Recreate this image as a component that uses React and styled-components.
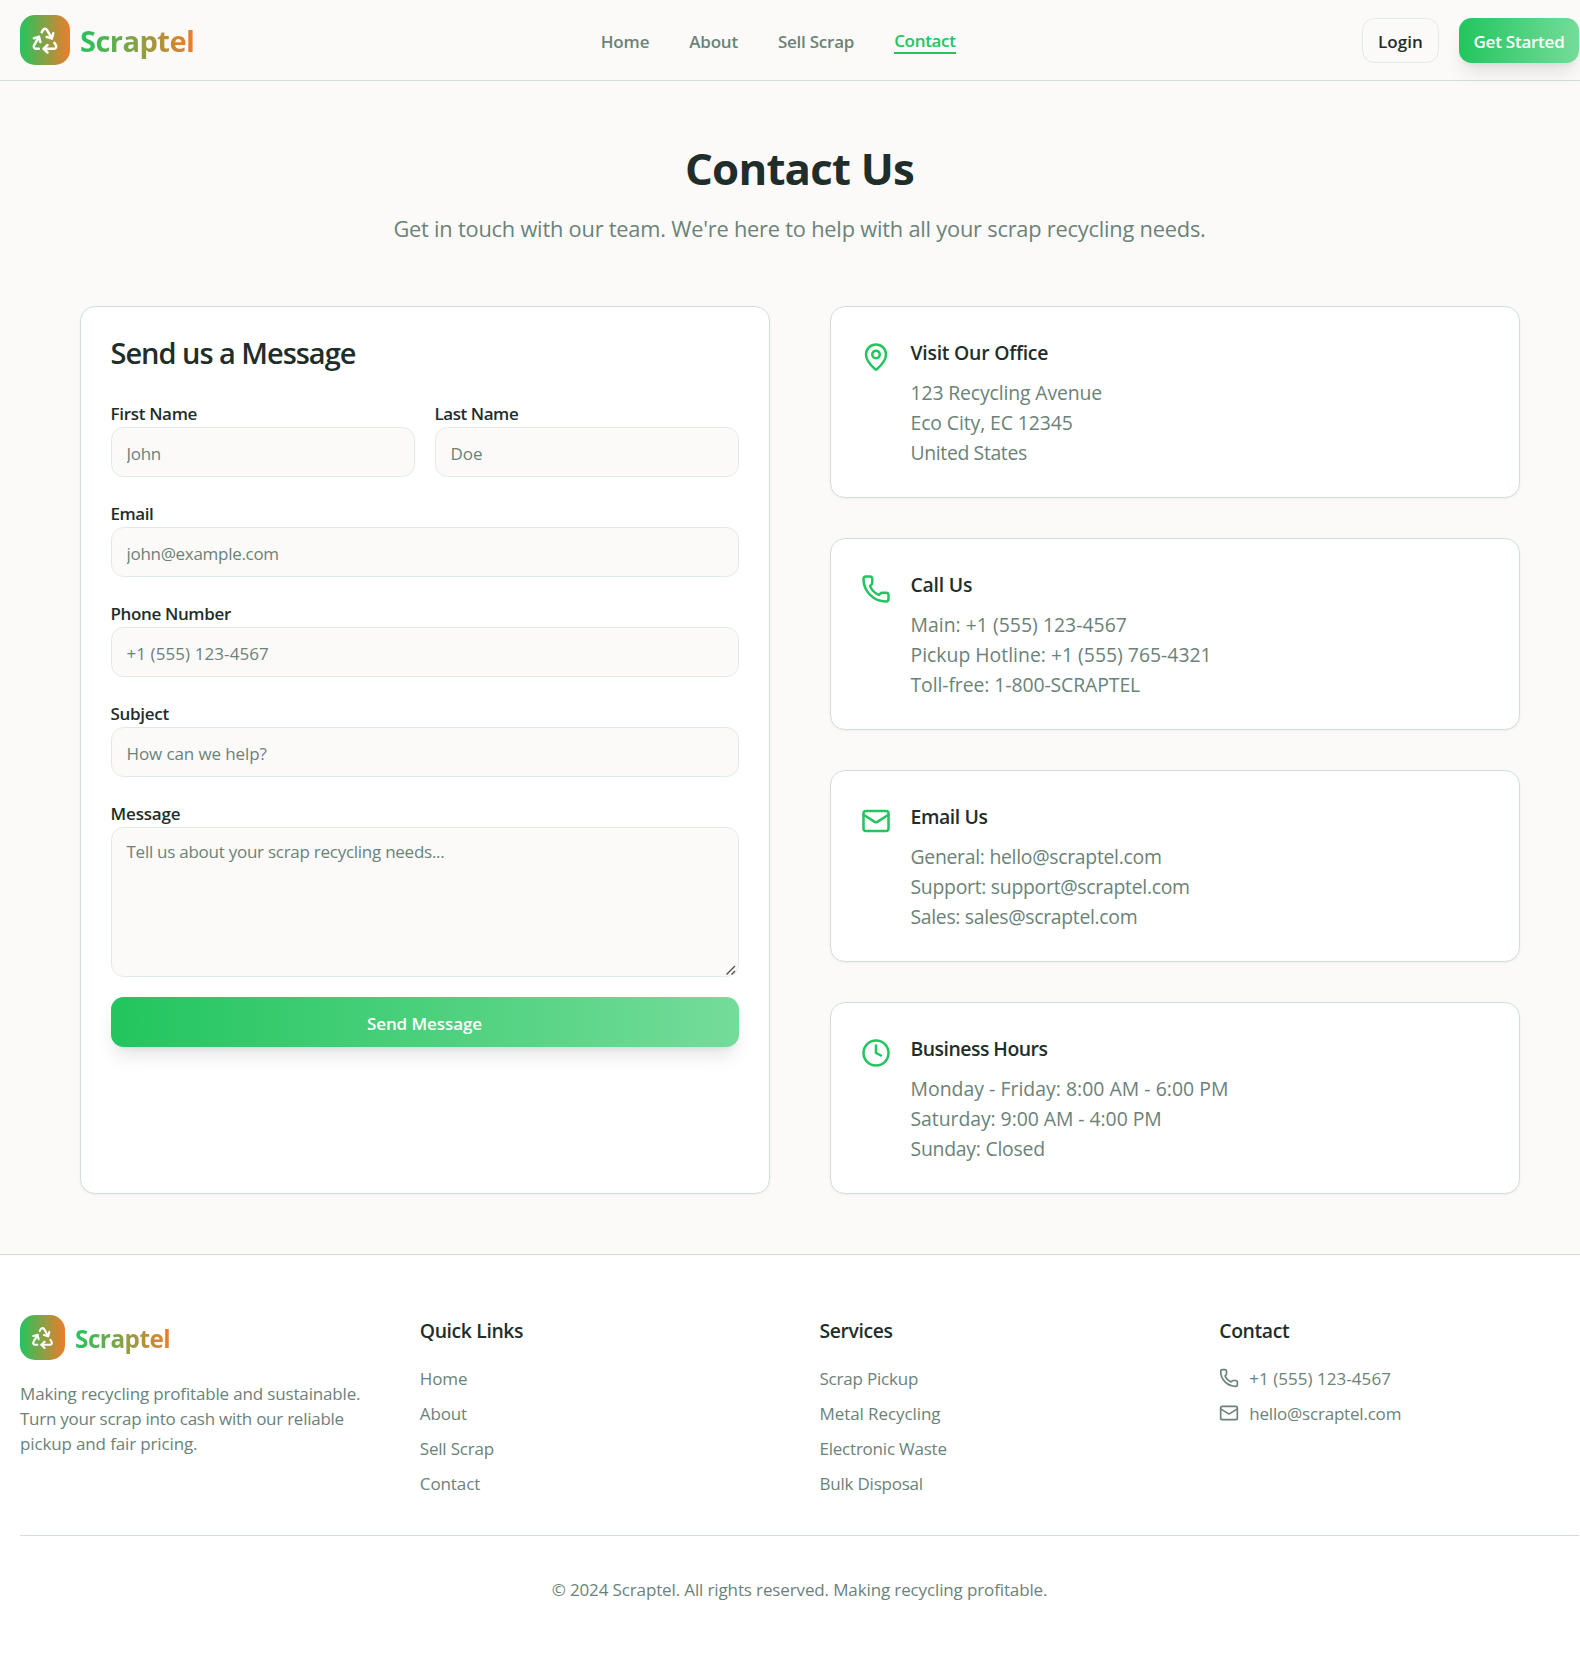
import React from "react";
import styled, { createGlobalStyle, css } from "styled-components";
import { Clock, Mail, MapPin, Phone, Recycle } from "lucide-react";

const color = {
  page: "#fcfaf8",
  card: "#ffffff",
  text: "#1f2e2a",
  muted: "#6b8279",
  line: "#cfe0d8",
  inputLine: "#e0ebe6",
  green: "#22c55e",
  greenLight: "#74dc9a",
  orange: "#ee7c2b",
};

const brandGradient = `linear-gradient(90deg, ${color.green}, ${color.orange})`;
const actionGradient = `linear-gradient(90deg, ${color.green}, ${color.greenLight})`;

const GlobalStyle = createGlobalStyle`
  *, *::before, *::after { box-sizing: border-box; }
  body {
    margin: 0;
    background: ${color.page};
    color: ${color.text};
    font-family: "Open Sans", "Noto Sans", sans-serif;
    font-size: 19.4px;
    line-height: 30px;
  }
  h1, h2, h3, p, ul { margin: 0; padding: 0; }
  ul { list-style: none; }
  a { color: inherit; text-decoration: none; }
`;

const tracked = css`
  letter-spacing: ${({ $track = 0 }) => $track}px;
`;

const small = css`
  font-size: 17px;
  line-height: 25px;
`;

const Viewport = styled.div`
  width: 100%;
  overflow: hidden;
`;

const Page = styled.div`
  width: 1599px;
`;

const Header = styled.header`
  display: flex;
  align-items: center;
  justify-content: space-between;
  height: 81px;
  padding: 0 20px;
  border-bottom: 1px solid ${color.line};
`;

const Brand = styled.div`
  display: flex;
  align-items: center;
  gap: 10px;
`;

const BrandMark = styled.span`
  display: flex;
  align-items: center;
  justify-content: center;
  width: ${({ $size }) => $size}px;
  height: ${({ $size }) => $size}px;
  border-radius: 15px;
  background: ${brandGradient};
  color: #fff;
`;

const BrandName = styled.span`
  ${tracked}
  padding-top: 4px;
  background: ${brandGradient};
  background-clip: text;
  -webkit-background-clip: text;
  color: transparent;
  font-size: ${({ $size }) => $size}px;
  font-weight: 700;
  line-height: 1.35;
`;

const Nav = styled.nav`
  display: flex;
  align-items: center;
  gap: 40px;
`;

const NavLink = styled.a`
  ${tracked}
  padding-top: 3px;
  color: ${({ $active }) => ($active ? color.green : color.muted)};
  border-bottom: ${({ $active }) => ($active ? `2px solid ${color.green}` : "0")};
  font-size: 17px;
  font-weight: 600;
  line-height: 23px;
`;

const HeaderActions = styled.div`
  display: flex;
  gap: 20px;
`;

const Button = styled.button`
  ${small}
  ${tracked}
  display: flex;
  align-items: center;
  justify-content: center;
  width: ${({ $width }) => $width};
  height: ${({ $height }) => $height}px;
  padding: 3px 0 0;
  border: 0;
  border-radius: 12.5px;
  font-family: inherit;
  font-weight: 600;
  white-space: nowrap;
`;

const OutlineButton = styled(Button)`
  border: 1px solid ${color.inputLine};
  background: ${color.page};
  color: ${color.text};
`;

const ActionButton = styled(Button)`
  background: ${actionGradient};
  color: #fff;
  box-shadow: 0 12.5px 18.75px -3.75px rgb(0 0 0 / 0.1), 0 5px 7.5px -5px rgb(0 0 0 / 0.1);
`;

const Main = styled.main`
  width: 1440px;
  margin: 0 auto;
  padding: 60px 0;
`;

const Intro = styled.div`
  display: flex;
  flex-direction: column;
  align-items: center;
  gap: 20px;
  margin-bottom: 60px;
`;

const Title = styled.h1`
  ${tracked}
  padding-top: 5px;
  font-size: 43.8px;
  font-weight: 700;
  line-height: 45px;
`;

const Subtitle = styled.p`
  ${tracked}
  padding-top: 1px;
  color: ${color.muted};
  font-size: 21.8px;
  line-height: 34px;
`;

const Columns = styled.div`
  display: grid;
  grid-template-columns: 1fr 1fr;
  gap: 60px;
`;

const Card = styled.section`
  padding: 30px;
  border: 1px solid ${color.line};
  border-radius: 15px;
  background: ${color.card};
  box-shadow: 0 1px 2.5px rgb(0 0 0 / 0.05);
`;

const CardTitle = styled.h2`
  ${tracked}
  margin-bottom: 30px;
  padding-top: 2px;
  font-size: 29px;
  font-weight: 600;
  line-height: 28px;
`;

const Form = styled.form`
  display: grid;
  gap: 20px;
`;

const FieldPair = styled.div`
  display: grid;
  grid-template-columns: 1fr 1fr;
  gap: 20px;
`;

const Field = styled.label`
  position: relative;
  display: flex;
  flex-direction: column;
`;

const FieldLabel = styled.span`
  ${tracked}
  padding-top: 4px;
  font-size: 17px;
  font-weight: 600;
  line-height: 26px;
`;

const control = css`
  ${small}
  display: block;
  width: 100%;
  border: 1px solid ${color.inputLine};
  border-radius: 12.5px;
  background: ${color.page};
  color: ${color.text};
  font-family: inherit;
  outline: 0;

  &::placeholder {
    ${tracked}
    color: ${color.muted};
    opacity: 1;
  }
`;

const Input = styled.input`
  ${control}
  height: 50px;
  padding: 13px 15px 11px;
`;

const TextArea = styled.textarea`
  ${control}
  height: 150px;
  padding: 11px 15px;
  resize: none;
`;

const ResizeGrip = styled.svg`
  position: absolute;
  right: 2px;
  bottom: 1px;
`;

const InfoList = styled.div`
  display: grid;
  gap: 40px;
`;

const InfoCard = styled(Card)`
  display: flex;
  gap: 20px;
  height: 192px;
  padding-top: 31px;
  color: ${color.green};

  > svg { margin-top: 4px; }
`;

const InfoTitle = styled.h3`
  ${tracked}
  margin-bottom: 10px;
  color: ${color.text};
  font-size: 19.4px;
  font-weight: 600;
`;

const InfoLine = styled.p`
  ${tracked}
  color: ${color.muted};
`;

const Footer = styled.footer`
  padding: 60px 20px;
  border-top: 1px solid ${color.line};
  background: ${color.card};
`;

const FooterColumns = styled.div`
  display: grid;
  grid-template-columns: repeat(4, 1fr);
  gap: 40px;
  height: 221px;
  border-bottom: 1px solid ${color.line};
`;

const Blurb = styled.p`
  ${small}
  margin-top: 21px;
  color: ${color.muted};
`;

const BlurbLine = styled.span`
  ${tracked}
  display: block;
`;

const FooterGroup = styled.div`
  padding-top: 1px;
`;

const FooterTitle = styled.h3`
  ${tracked}
  margin-bottom: 20px;
  font-size: 19.4px;
  font-weight: 600;
`;

const FooterLinks = styled.ul`
  display: grid;
  gap: 10px;
  color: ${color.muted};
`;

const FooterLink = styled.li`
  ${small}
  ${tracked}
  display: flex;
  align-items: center;
  gap: 10px;

  > svg { margin-bottom: 2px; }
`;

const Copyright = styled.p`
  ${small}
  ${tracked}
  padding-top: 41px;
  color: ${color.muted};
  text-align: center;
`;

const navLinks = [
  { text: "Home", track: -0.13 },
  { text: "About", track: -0.23 },
  { text: "Sell Scrap", track: -0.24 },
  { text: "Contact", track: -0.31, active: true },
];

const contactCards = [
  {
    icon: MapPin,
    title: ["Visit Our Office", -0.24],
    lines: [["123 Recycling Avenue", -0.13], ["Eco City, EC 12345", -0.1], ["United States", -0.36]],
  },
  {
    icon: Phone,
    title: ["Call Us", -0.22],
    lines: [["Main: +1 (555) 123-4567", 0.02], ["Pickup Hotline: +1 (555) 765-4321", 0], ["Toll-free: 1-800-SCRAPTEL", -0.09]],
  },
  {
    icon: Mail,
    title: ["Email Us", -0.42],
    lines: [["General: hello@scraptel.com", -0.29], ["Support: support@scraptel.com", -0.28], ["Sales: sales@scraptel.com", -0.32]],
  },
  {
    icon: Clock,
    title: ["Business Hours", -0.5],
    lines: [["Monday - Friday: 8:00 AM - 6:00 PM", 0.03], ["Saturday: 9:00 AM - 4:00 PM", -0.05], ["Sunday: Closed", -0.24]],
  },
];

const footerGroups = [
  {
    title: ["Quick Links", -0.38],
    links: [["Home", -0.08], ["About", -0.11], ["Sell Scrap", -0.18], ["Contact", -0.08]],
  },
  {
    title: ["Services", -0.4],
    links: [["Scrap Pickup", -0.21], ["Metal Recycling", -0.08], ["Electronic Waste", -0.22], ["Bulk Disposal", -0.22]],
  },
  {
    title: ["Contact", -0.38],
    links: [["+1 (555) 123-4567", 0.04, Phone], ["hello@scraptel.com", -0.2, Mail]],
  },
];

const blurb = [
  ["Making recycling profitable and sustainable.", -0.16],
  ["Turn your scrap into cash with our reliable", -0.25],
  ["pickup and fair pricing.", -0.14],
];

function TextField({ label, labelTrack, placeholder, track }) {
  return (
    <Field>
      <FieldLabel $track={labelTrack}>{label}</FieldLabel>
      <Input placeholder={placeholder} $track={track} />
    </Field>
  );
}

export default function App() {
  return (
    <Viewport>
      <GlobalStyle />
      <Page>
        <Header>
          <Brand>
            <BrandMark $size={50}><Recycle size={30} /></BrandMark>
            <BrandName $size={29.1} $track={-0.57}>Scraptel</BrandName>
          </Brand>
          <Nav>
            {navLinks.map(({ text, track, active }) => (
              <NavLink key={text} href="#" $track={track} $active={active}>{text}</NavLink>
            ))}
          </Nav>
          <HeaderActions>
            <OutlineButton $width="77px" $height={45} $track={0.05}>Login</OutlineButton>
            <ActionButton $width="120px" $height={45} $track={-0.24}>Get Started</ActionButton>
          </HeaderActions>
        </Header>

        <Main>
          <Intro>
            <Title $track={-0.8}>Contact Us</Title>
            <Subtitle $track={-0.21}>
              Get in touch with our team. We're here to help with all your scrap recycling needs.
            </Subtitle>
          </Intro>
          <Columns>
            <Card>
              <CardTitle $track={-1.03}>Send us a Message</CardTitle>
              <Form>
                <FieldPair>
                  <TextField label="First Name" labelTrack={-0.32} placeholder="John" track={-0.3} />
                  <TextField label="Last Name" labelTrack={-0.44} placeholder="Doe" track={0} />
                </FieldPair>
                <TextField label="Email" labelTrack={-0.48} placeholder="john@example.com" track={-0.3} />
                <TextField label="Phone Number" labelTrack={-0.36} placeholder="+1 (555) 123-4567" track={0.08} />
                <TextField label="Subject" labelTrack={-0.3} placeholder="How can we help?" track={-0.11} />
                <Field>
                  <FieldLabel $track={-0.16}>Message</FieldLabel>
                  <TextArea placeholder="Tell us about your scrap recycling needs..." $track={-0.26} />
                  <ResizeGrip width="12" height="12" fill="none" stroke="#4f4f4f" strokeWidth="1.4">
                    <path d="M1.5 10.5 10 2M6.5 10.5 10 7" />
                  </ResizeGrip>
                </Field>
                <ActionButton type="button" $width="100%" $height={50} $track={-0.07}>Send Message</ActionButton>
              </Form>
            </Card>
            <InfoList>
              {contactCards.map(({ icon: Icon, title, lines }) => (
                <InfoCard key={title[0]}>
                  <Icon size={30} />
                  <div>
                    <InfoTitle $track={title[1]}>{title[0]}</InfoTitle>
                    {lines.map(([text, track]) => (
                      <InfoLine key={text} $track={track}>{text}</InfoLine>
                    ))}
                  </div>
                </InfoCard>
              ))}
            </InfoList>
          </Columns>
        </Main>

        <Footer>
          <FooterColumns>
            <div>
              <Brand>
                <BrandMark $size={45}><Recycle size={25} /></BrandMark>
                <BrandName $size={24.3} $track={-0.5}>Scraptel</BrandName>
              </Brand>
              <Blurb>
                {blurb.map(([text, track]) => (
                  <BlurbLine key={text} $track={track}>{text} </BlurbLine>
                ))}
              </Blurb>
            </div>
            {footerGroups.map(({ title, links }) => (
              <FooterGroup key={title[0]}>
                <FooterTitle $track={title[1]}>{title[0]}</FooterTitle>
                <FooterLinks>
                  {links.map(([text, track, Icon]) => (
                    <FooterLink key={text} $track={track}>
                      {Icon && <Icon size={20} />}
                      <a href="#">{text}</a>
                    </FooterLink>
                  ))}
                </FooterLinks>
              </FooterGroup>
            ))}
          </FooterColumns>
          <Copyright $track={-0.13}>
            © 2024 Scraptel. All rights reserved. Making recycling profitable.
          </Copyright>
        </Footer>
      </Page>
    </Viewport>
  );
}
